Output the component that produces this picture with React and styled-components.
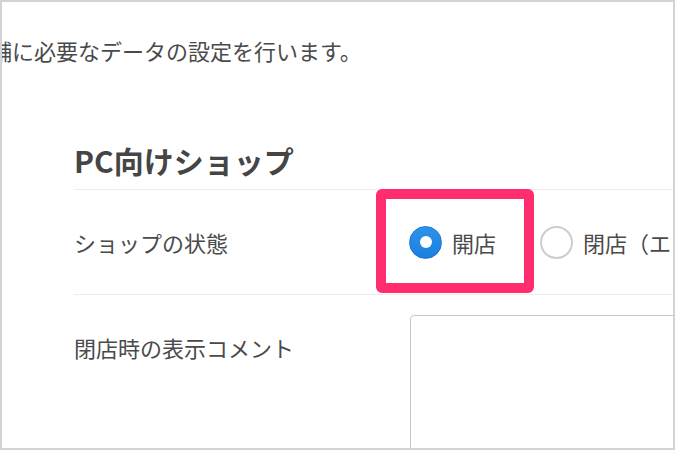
import React from 'react';
import styled, { createGlobalStyle } from 'styled-components';

const GlobalStyle = createGlobalStyle`
  body {
    margin: 0;
    background: #fff;
    font-family: "Noto Sans CJK JP", "Noto Sans", sans-serif;
    color: #4a4a4a;
  }
`;

const Frame = styled.div`
  width: 675px;
  height: 450px;
  box-sizing: border-box;
  border: 2px solid #d3d3d3;
  background: #fff;
  overflow: hidden;
`;

const Intro = styled.p`
  margin: 0 0 0 -12px;
  padding-top: 33px;
  font-size: 22px;
  line-height: 30px;
  white-space: nowrap;
  color: #4a4a4a;
`;

const Section = styled.section`
  margin: 75px 0 0 72px;
`;

const Heading = styled.h2`
  margin: 0;
  padding-bottom: 9px;
  font-size: 30px;
  line-height: 40px;
  font-weight: 700;
  color: #454545;
  border-bottom: 1px solid #ececec;
`;

const Row = styled.div`
  display: grid;
  grid-template-columns: 335px 1fr;
  align-items: ${(p) => (p.$top ? 'start' : 'center')};
  min-height: 104px;
  padding-top: ${(p) => (p.$top ? '20px' : '0')};
  border-bottom: ${(p) => (p.$top ? 'none' : '1px solid #ececec')};
`;

const Label = styled.div`
  font-size: 22px;
  line-height: 30px;
  margin-top: ${(p) => (p.$top ? '17px' : '0')};
  white-space: nowrap;
`;

const RadioGroup = styled.div`
  display: flex;
  align-items: center;
  gap: 44px;
  white-space: nowrap;
`;

const Option = styled.label`
  position: relative;
  display: flex;
  align-items: center;
  gap: 10px;
  font-size: 22px;
  line-height: 30px;
`;

const RadioMark = styled.span`
  width: 33px;
  height: 33px;
  box-sizing: border-box;
  border-radius: 50%;
  flex-shrink: 0;
  display: flex;
  align-items: center;
  justify-content: center;
  border: ${(p) => (p.$checked ? '1px solid #1b74d4' : '2px solid #cdcdcd')};
  background: ${(p) => (p.$checked ? 'linear-gradient(#2c93ec, #1a7fdf)' : '#fff')};

  &::after {
    content: '';
    display: ${(p) => (p.$checked ? 'block' : 'none')};
    width: 12px;
    height: 12px;
    border-radius: 50%;
    background: #fff;
  }
`;

const Highlight = styled.span`
  position: absolute;
  left: -33px;
  right: -38px;
  top: -37px;
  bottom: -34px;
  border: 10px solid #ff2d6e;
  border-radius: 6px;
  pointer-events: none;
`;

const CommentBox = styled.div`
  margin-left: 1px;
  width: calc(100% + 20px);
  height: 200px;
  box-sizing: border-box;
  border: 1.5px solid #c9c9c9;
  border-radius: 4px;
`;

export default function App() {
  return (
    <>
      <GlobalStyle />
      <Frame>
        <Intro>舗に必要なデータの設定を行います。</Intro>
        <Section>
          <Heading>PC向けショップ</Heading>
          <Row>
            <Label>ショップの状態</Label>
            <RadioGroup>
              <Option>
                <RadioMark $checked />
                開店
                <Highlight />
              </Option>
              <Option>
                <RadioMark />
                閉店（エラー画面を表示）
              </Option>
            </RadioGroup>
          </Row>
          <Row $top>
            <Label $top>閉店時の表示コメント</Label>
            <CommentBox />
          </Row>
        </Section>
      </Frame>
    </>
  );
}
